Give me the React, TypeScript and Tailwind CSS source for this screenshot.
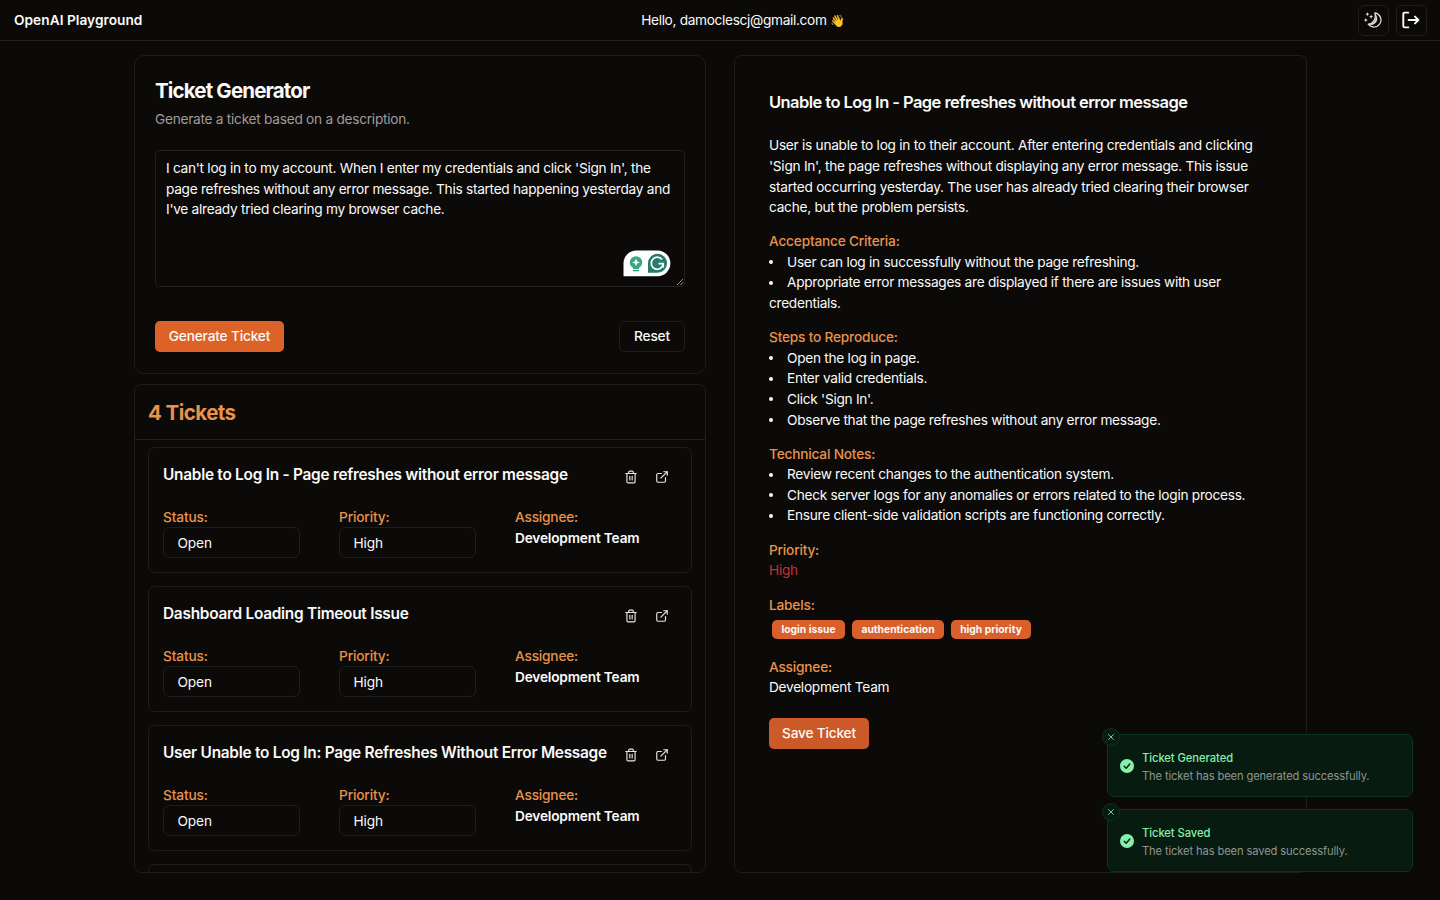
import type { ReactNode } from "react";
import { Trash2, ExternalLink, X } from "lucide-react";

const tickets = [
  "Unable to Log In - Page refreshes without error message",
  "Dashboard Loading Timeout Issue",
  "User Unable to Log In: Page Refreshes Without Error Message",
];

function NightIcon() {
  return (
    <svg width="18" height="18" viewBox="0 0 18 18" fill="none" stroke="#e7e5e4" strokeWidth="1.2" strokeLinejoin="round">
      <path d="M10.9 1.9A7.1 7.1 0 1 1 4.2 13.2C8.6 13.4 12.6 8 10.9 1.9Z" />
      <path d="M11.2 3.6C13.4 7.4 10.6 13.2 6.2 13.6C10 13.8 12.8 11 12.8 8.2C12.8 6.2 12.2 4.6 11.2 3.6Z" fill="#e7e5e4" strokeWidth="0.8" />
      <path d="M3.4 1.2L4 2.6L5.4 3.2L4 3.8L3.4 5.2L2.8 3.8L1.4 3.2L2.8 2.6Z" fill="#e7e5e4" stroke="none" />
      <path d="M1.8 7.1L2.4 8.5L3.8 9.1L2.4 9.7L1.8 11.1L1.2 9.7L-0.2 9.1L1.2 8.5Z" fill="#e7e5e4" stroke="none" />
      <path d="M7.1 3.7L7.7 5.1L9.1 5.7L7.7 6.3L7.1 7.7L6.5 6.3L5.1 5.7L6.5 5.1Z" fill="#e7e5e4" stroke="none" />
    </svg>
  );
}

function ExitIcon() {
  return (
    <svg width="18" height="18" viewBox="0 0 18 18" fill="none" stroke="#fafaf9" strokeWidth="1.9" strokeLinecap="round" strokeLinejoin="round">
      <path d="M6.3 1.6H2.6Q1.3 1.6 1.3 2.9V15.1Q1.3 16.4 2.6 16.4H6.3" />
      <path d="M6.6 9H16.4M13 5.6L16.4 9L13 12.4" />
    </svg>
  );
}

function AssistantBadge() {
  return (
    <svg width="48" height="27" viewBox="0 0 48 27">
      <path d="M0.5 26.2V13.3A12.9 12.9 0 0 1 13.4 0.4H34.5A12.9 12.9 0 0 1 34.5 26.2Z" fill="#fff" />
      <circle cx="13" cy="12.4" r="6.2" fill="#35a884" />
      <path d="M10 17H16V19H10Z" fill="#35a884" />
      <path d="M10.3 20.6H15.7" stroke="#2f8f74" strokeWidth="1.3" strokeLinecap="round" />
      <path d="M13 8.6L14.1 11.3L16.8 12.4L14.1 13.5L13 16.2L11.9 13.5L9.2 12.4L11.9 11.3Z" fill="#fff" />
      <path d="M25 22.8V13.3A9.5 9.5 0 1 1 34.5 22.8Z" fill="#287c6c" />
      <path d="M39 9.6A6 6 0 1 0 40.2 13.6H35.5M40.2 13.2V17.6" fill="none" stroke="#fff" strokeWidth="1.7" />
    </svg>
  );
}

function Field({ label, value }: { label: string; value: string }) {
  return (
    <div className="w-[176px]">
      <div className="h-[20px] text-[13.7px] leading-[20.5px] font-medium tracking-[-0.15px] text-[#e8924a]">{label}</div>
      <div className="h-[31px] w-[137px] rounded-[6px] border border-[#1f1d1b] pl-[13.5px] text-[13.7px] leading-[30px] tracking-[-0.15px]">{value}</div>
    </div>
  );
}

function TicketCard({ title }: { title: string }) {
  return (
    <div className="h-[126px] shrink-0 rounded-[7px] border border-[#1f1d1b] px-[14px] pt-[14px]">
      <div className="flex h-[45px] justify-between">
        <div className="pt-[1px] text-[15.4px] leading-[24px] font-semibold tracking-[-0.26px] whitespace-nowrap">{title}</div>
        <div className="flex gap-[17px] pt-[8px] pr-[8px] text-[#e7e5e4]">
          <Trash2 size={14} />
          <ExternalLink size={14} />
        </div>
      </div>
      <div className="flex">
        <Field label="Status:" value="Open" />
        <Field label="Priority:" value="High" />
        <div className="text-[13.7px] leading-[20.5px] tracking-[-0.19px]">
          <div className="font-medium text-[#e8924a]">Assignee:</div>
          <div className="font-semibold">Development Team</div>
        </div>
      </div>
    </div>
  );
}

function Section({ title, children }: { title: string; children: ReactNode }) {
  return (
    <section className="mt-[13.7px]">
      <h3 className="font-medium tracking-[-0.2px] text-[#e8924a]">{title}</h3>
      {children}
    </section>
  );
}

function Bullet({ children }: { children: ReactNode }) {
  return (
    <li className="flex whitespace-nowrap">
      <span className="flex h-[20.57px] w-[18px] items-center">
        <span className="size-[4px] rounded-full bg-[#fafaf9]" />
      </span>
      <span>{children}</span>
    </li>
  );
}

function Toast({ title, text }: { title: string; text: string }) {
  return (
    <div className="relative flex h-[63px] items-center rounded-[7px] border border-[#0c3320] bg-[#071b10] pl-[12px]">
      <span className="absolute -top-[7px] -left-[6px] flex size-[18px] items-center justify-center rounded-full border border-[#0c3320] bg-[#071b10] text-[#86efac]">
        <X size={10} strokeWidth={2} />
      </span>
      <svg width="14" height="14" viewBox="0 0 14 14" className="mr-[8px]">
        <circle cx="7" cy="7" r="7" fill="#86efac" />
        <path d="M4.2 7.3L6.2 9.2L9.8 5" fill="none" stroke="#071b10" strokeWidth="1.4" strokeLinecap="round" strokeLinejoin="round" />
      </svg>
      <div className="pt-[2px] text-[11.2px] leading-[18px]">
        <div className="font-medium tracking-[-0.06px] text-[#86efac]">{title}</div>
        <div className="tracking-[-0.13px] text-[#8f9691]">{text}</div>
      </div>
    </div>
  );
}

export default function App() {
  return (
    <div className="relative flex h-[900px] w-[1440px] flex-col overflow-hidden bg-[#0c0a09] font-['Inter',sans-serif] text-[13.7px] leading-[20.57px] tracking-[-0.285px] text-[#fafaf9]">
      <header className="grid h-[41px] shrink-0 grid-cols-[1fr_auto_1fr] items-center border-b border-[#23211f] px-[13px]">
        <div className="font-semibold tracking-[0.03px] pl-[1px]">OpenAI Playground</div>
        <div className="pt-[1px] pl-[46px] tracking-[-0.33px]">Hello, damoclescj@gmail.com <span className="text-[12px]">👋</span></div>
        <div className="flex justify-end gap-[7px]">
          <div className="flex size-[31px] items-center justify-center rounded-[6px] border border-[#1f1d1b] pr-[1px]"><NightIcon /></div>
          <div className="flex size-[31px] items-center justify-center rounded-[6px] border border-[#1f1d1b] pr-[2px]"><ExitIcon /></div>
        </div>
      </header>

      <main className="flex gap-[28px] pt-[14px] pl-[134px]">
        <div className="flex w-[572px] flex-col gap-[10px]">
          <div className="h-[319px] rounded-[10px] border border-[#1f1d1b] px-[20px] pt-[20px]">
            <h1 className="text-[20.5px] leading-[30px] font-bold tracking-[-0.85px]">Ticket Generator</h1>
            <p className="mt-[3px] tracking-[-0.27px] text-[#a19c98]">Generate a ticket based on a description.</p>
            <div className="relative mt-[20px] h-[137px] rounded-[5px] border border-[#23211f] px-[10px] pt-[7.6px] tracking-[-0.29px] whitespace-nowrap">
              I can't log in to my account. When I enter my credentials and click 'Sign In', the<br />
              page refreshes without any error message. This started happening yesterday and<br />
              I've already tried clearing my browser cache.
              <div className="absolute right-[13px] bottom-[9px]"><AssistantBadge /></div>
              <svg className="absolute right-0 bottom-0" width="8" height="8" viewBox="0 0 8 8" stroke="#a8a29e" strokeWidth="0.9">
                <path d="M1 7L7 1M4.5 7L7 4.5" />
              </svg>
            </div>
            <div className="mt-[34px] flex justify-between font-medium tracking-[-0.18px]">
              <div className="flex h-[31px] w-[129px] items-center justify-center rounded-[5px] bg-[#dd6228] pt-[1px]">Generate Ticket</div>
              <div className="flex h-[31px] w-[66px] items-center justify-center rounded-[5px] border border-[#1f1d1b] pt-[1px]">Reset</div>
            </div>
          </div>

          <div className="flex h-[489px] flex-col overflow-hidden rounded-[7px] border border-[#1f1d1b]">
            <h2 className="h-[55px] shrink-0 border-b border-[#23211f] pl-[13px] text-[20.5px] leading-[55px] font-bold tracking-[-0.55px] text-[#e8924a]">4 Tickets</h2>
            <div className="flex flex-col gap-[13px] overflow-hidden px-[13px] pt-[7px]">
              {tickets.map((t) => <TicketCard key={t} title={t} />)}
              <div className="h-[20px] shrink-0 rounded-t-[7px] border border-b-0 border-[#1f1d1b]" />
            </div>
          </div>
        </div>

        <article className="h-[818px] w-[573px] rounded-[7px] border border-[#1f1d1b] pt-[33px] pl-[34px]">
          <h2 className="text-[16.5px] leading-[26px] font-semibold tracking-[-0.56px]">Unable to Log In - Page refreshes without error message</h2>
          <p className="mt-[20.4px] tracking-[-0.275px] whitespace-nowrap">
            User is unable to log in to their account. After entering credentials and clicking<br />
            'Sign In', the page refreshes without displaying any error message. This issue<br />
            started occurring yesterday. The user has already tried clearing their browser<br />
            cache, but the problem persists.
          </p>
          <Section title="Acceptance Criteria:">
            <ul>
              <Bullet>User can log in successfully without the page refreshing.</Bullet>
              <Bullet>Appropriate error messages are displayed if there are issues with user</Bullet>
            </ul>
            <div>credentials.</div>
          </Section>
          <Section title="Steps to Reproduce:">
            <ul>
              <Bullet>Open the log in page.</Bullet>
              <Bullet>Enter valid credentials.</Bullet>
              <Bullet>Click 'Sign In'.</Bullet>
              <Bullet>Observe that the page refreshes without any error message.</Bullet>
            </ul>
          </Section>
          <Section title="Technical Notes:">
            <ul>
              <Bullet>Review recent changes to the authentication system.</Bullet>
              <Bullet>Check server logs for any anomalies or errors related to the login process.</Bullet>
              <Bullet>Ensure client-side validation scripts are functioning correctly.</Bullet>
            </ul>
          </Section>
          <Section title="Priority:">
            <div className="text-[#c23337]">High</div>
          </Section>
          <Section title="Labels:">
            <div className="mt-[5px] flex gap-[7px] pl-[3px] text-[10.3px] leading-[19px] font-bold tracking-[0px]">
              <span className="w-[73px] rounded-[5px] bg-[#d95f2b] text-center">login issue</span>
              <span className="w-[92px] rounded-[5px] bg-[#d95f2b] text-center">authentication</span>
              <span className="w-[80px] rounded-[5px] bg-[#d95f2b] text-center">high priority</span>
            </div>
          </Section>
          <div className="mt-[17.6px]">
            <h3 className="font-medium tracking-[-0.2px] text-[#e8924a]">Assignee:</h3>
            <div>Development Team</div>
          </div>
          <div className="mt-[20.2px] flex h-[31px] w-[100px] items-center justify-center rounded-[5px] bg-[#cb5a28] font-medium tracking-[-0.2px]">Save Ticket</div>
        </article>
      </main>

      <div className="absolute top-[734px] left-[1107px] flex w-[306px] flex-col gap-[12px]">
        <Toast title="Ticket Generated" text="The ticket has been generated successfully." />
        <Toast title="Ticket Saved" text="The ticket has been saved successfully." />
      </div>
    </div>
  );
}
